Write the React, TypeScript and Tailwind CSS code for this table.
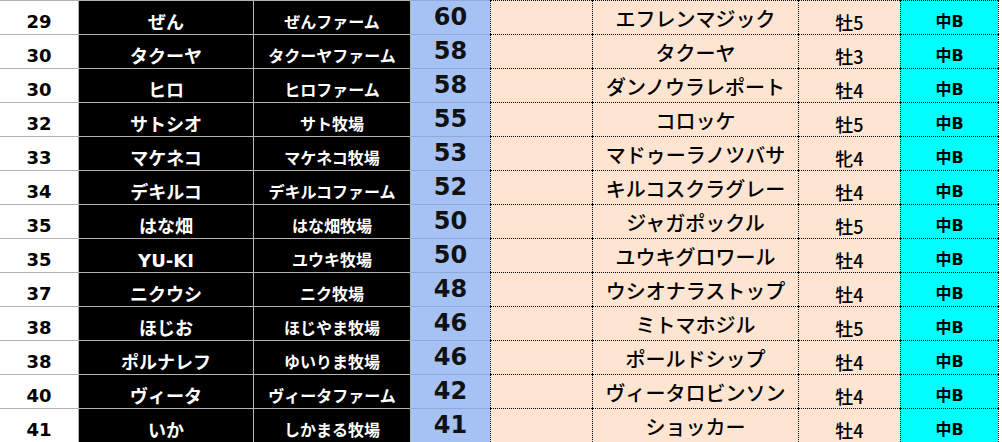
import React from "react";

type Row = [string, string, string, string, string, string, string];

const rows: Row[] = [
  ["29", "ぜん", "ぜんファーム", "60", "エフレンマジック", "牡5", "中B"],
  ["30", "タクーヤ", "タクーヤファーム", "58", "タクーヤ", "牡3", "中B"],
  ["30", "ヒロ", "ヒロファーム", "58", "ダンノウラレポート", "牡4", "中B"],
  ["32", "サトシオ", "サト牧場", "55", "コロッケ", "牡5", "中B"],
  ["33", "マケネコ", "マケネコ牧場", "53", "マドゥーラノツバサ", "牝4", "中B"],
  ["34", "デキルコ", "デキルコファーム", "52", "キルコスクラグレー", "牡4", "中B"],
  ["35", "はな畑", "はな畑牧場", "50", "ジャガポックル", "牡5", "中B"],
  ["35", "YU-KI", "ユウキ牧場", "50", "ユウキグロワール", "牡4", "中B"],
  ["37", "ニクウシ", "ニク牧場", "48", "ウシオナラストップ", "牡4", "中B"],
  ["38", "ほじお", "ほじやま牧場", "46", "ミトマホジル", "牡5", "中B"],
  ["38", "ポルナレフ", "ゆいりま牧場", "46", "ポールドシップ", "牡4", "中B"],
  ["40", "ヴィータ", "ヴィータファーム", "42", "ヴィータロビンソン", "牡4", "中B"],
  ["41", "いか", "しかまる牧場", "41", "ショッカー", "牡4", "中B"],
];

export default function App() {
  return (
    <div
      className="w-[1002px] h-[442px] bg-white overflow-hidden"
      style={{ fontFamily: '"DejaVu Sans", "Noto Sans CJK JP", sans-serif' }}
    >
      {rows.map((r, i) => (
        <div key={i} className="flex h-[34px]">
          <div className="w-[78px] border-t border-[#b4b4b4] bg-white flex items-center justify-center pt-[9px] text-[18px] font-bold leading-none text-black">
            {r[0]}
          </div>
          <div className="w-[175px] border-t border-l border-[#b4b4b4] bg-black flex items-center justify-center pt-[10px] text-[18px] font-bold leading-none text-white">
            {r[1]}
          </div>
          <div className="w-[157px] border-t border-l border-[#b4b4b4] bg-black flex items-center justify-center pt-[11px] text-[16px] font-bold leading-none text-white">
            {r[2]}
          </div>
          <div className="w-[80px] border-t border-t-[#8eaadb] border-l border-l-[#b4b4b4] bg-[#a6c1f3] flex items-center justify-center pb-[1px] text-[24px] font-bold leading-none text-[#111]">
            {r[3]}
          </div>
          <div className="w-[102px] border-t border-l border-dotted border-black bg-[#fde5d2]" />
          <div className="w-[206px] border-t border-l border-dotted border-black bg-[#fde5d2] flex items-center justify-center pt-[4px] text-[20px] font-medium leading-none text-black">
            {r[4]}
          </div>
          <div
            className="w-[102px] border-t border-l border-dotted border-black bg-[#fde5d2] flex items-center justify-center pt-[8px] text-[18px] font-medium leading-none text-black"
            style={{ fontFamily: '"Noto Sans CJK JP", sans-serif' }}
          >
            {r[5]}
          </div>
          <div className="w-[98px] border-t border-l border-dotted border-black bg-[#00ffff] flex items-center justify-center pt-[9px] text-[16px] font-bold leading-none text-black">
            {r[6]}
          </div>
          <div className="flex-1 border-l border-dotted border-black bg-white" />
        </div>
      ))}
    </div>
  );
}
